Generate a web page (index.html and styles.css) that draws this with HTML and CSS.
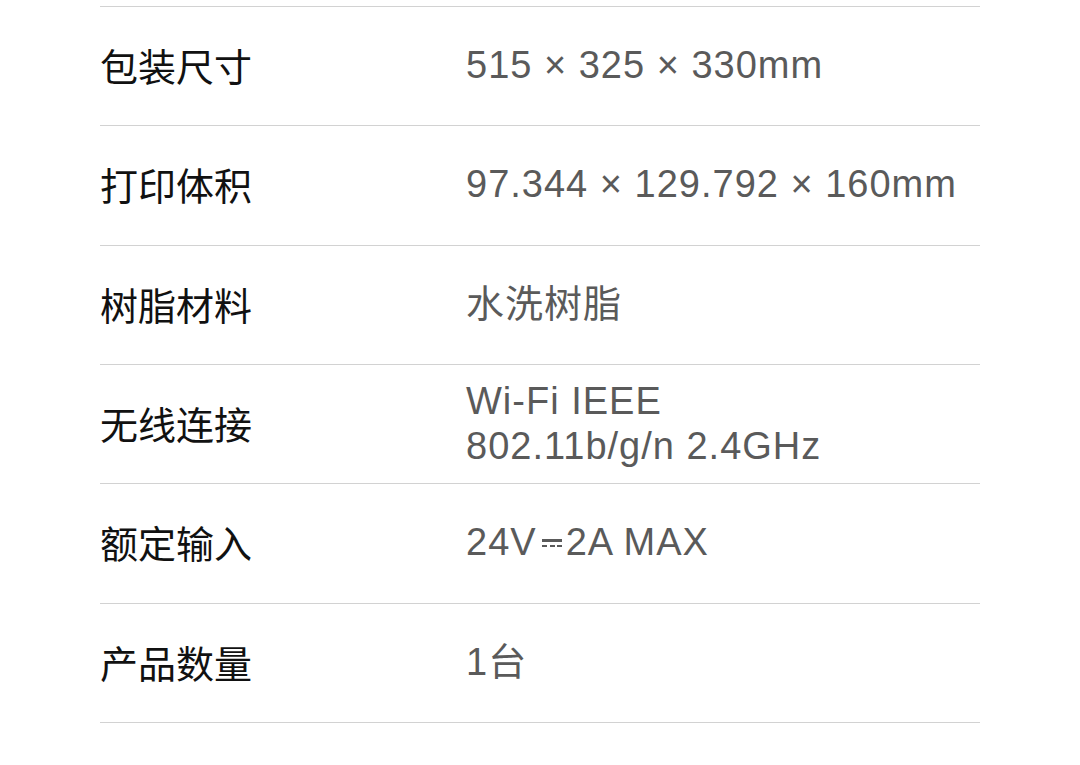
FILE: index.html
```html
<!DOCTYPE html>
<html lang="zh-CN">
<head>
<meta charset="utf-8">
<link rel="stylesheet" href="styles.css">
</head>
<body>
<div class="specs">
  <div class="row"><div class="label">包装尺寸</div><div class="value">515 × 325 × 330mm</div></div>
  <div class="row"><div class="label">打印体积</div><div class="value">97.344 × 129.792 × 160mm</div></div>
  <div class="row"><div class="label">树脂材料</div><div class="value">水洗树脂</div></div>
  <div class="row"><div class="label">无线连接</div><div class="value two">Wi-Fi IEEE<br>802.11b/g/n 2.4GHz</div></div>
  <div class="row"><div class="label">额定输入</div><div class="value">24V<span class="dc" aria-label="⎓"><span class="dc-solid"></span><span class="dc-dash"></span></span>2A MAX</div></div>
  <div class="row"><div class="label">产品数量</div><div class="value">1台</div></div>
</div>
</body>
</html>
```

FILE: styles.css
```css
html, body {
  margin: 0;
  padding: 0;
  background: #fff;
}
.specs {
  margin: 6px 100px 0 100px;
  border-top: 1px solid #d2d2d2;
  font-family: "Liberation Sans", "Noto Sans CJK SC", sans-serif;
}
.row {
  display: grid;
  grid-template-columns: 366px 1fr;
  align-items: center;
  height: 119.33px;
  box-sizing: border-box;
  border-bottom: 1px solid #d2d2d2;
}
.label {
  font-family: "Noto Sans CJK SC", sans-serif;
  font-size: 38px;
  color: #111;
  line-height: 45px;
  margin-top: -3px;
}
.value {
  font-size: 38px;
  letter-spacing: 1px;
  color: #5a5a5a;
  line-height: 45px;
  margin-top: -1px;
}
.value.two {
  margin-top: 0;
}
.dc {
  display: inline-flex;
  flex-direction: column;
  gap: 3px;
  width: 20px;
  margin: 0 4px 0 5px;
  vertical-align: 13px;
}
.dc-solid {
  height: 3px;
  background: #5a5a5a;
}
.dc-dash {
  height: 2px;
  background: repeating-linear-gradient(90deg, #5a5a5a 0 5px, transparent 5px 7.5px);
}
```
